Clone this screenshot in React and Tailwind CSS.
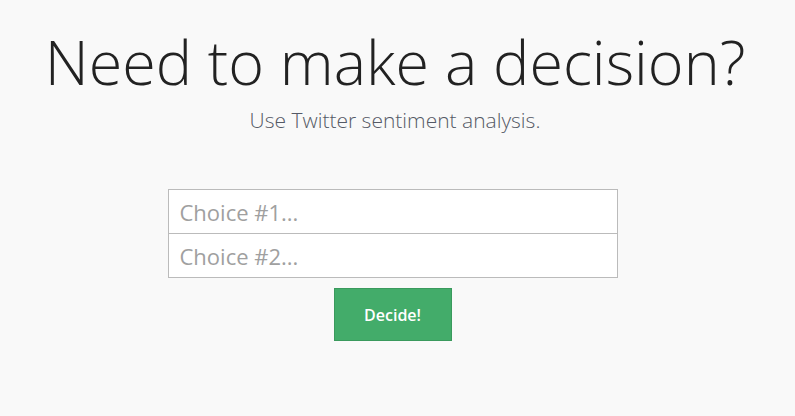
import React, { useState } from 'react';

// Landing form: two choices in, one decision out.
const App = () => {
  const [first, setFirst] = useState('');
  const [second, setSecond] = useState('');

  return (
    <div className="min-h-screen bg-[#f9f9f9] font-['Open_Sans',sans-serif]">
      <div className="flex flex-col items-center pt-[31px]">
        <h1 className="mr-[5px] text-[61px] leading-[62px] font-light text-[#222] tracking-normal">
          Need to make a decision?
        </h1>
        <p className="mt-4 mr-[5px] text-[21px] leading-[22px] font-light text-[#555a66]">
          Use Twitter sentiment analysis.
        </p>

        <form className="mt-[58px] mr-[10px] w-[450px] flex flex-col items-center" onSubmit={(e) => e.preventDefault()}>
          <input
            value={first}
            onChange={(e) => setFirst(e.target.value)}
            placeholder="Choice #1..."
            className="w-full h-[45px] bg-white border border-[#bbbbbb] px-[11px] text-[22px] font-medium text-[#333] placeholder:text-[#a0a0a0] outline-none"
          />
          <input
            value={second}
            onChange={(e) => setSecond(e.target.value)}
            placeholder="Choice #2..."
            className="w-full h-[45px] -mt-px bg-white border border-[#bbbbbb] px-[11px] text-[22px] font-medium text-[#333] placeholder:text-[#a0a0a0] outline-none"
          />
          <button
            type="submit"
            className="mt-[10px] w-[118px] h-[53px] bg-[#43ac6a] border border-[#3a9a5d] text-white text-[16px] font-semibold"
          >
            Decide!
          </button>
        </form>
      </div>
    </div>
  );
};

export default App;
